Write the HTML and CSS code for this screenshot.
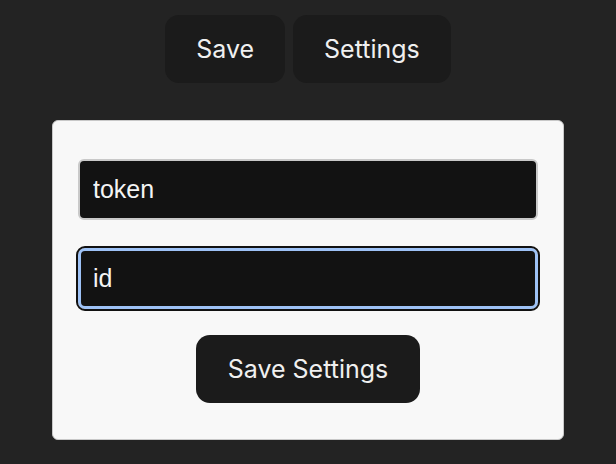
FILE: index.html
```html
<!DOCTYPE html>
<html>
<head>
<meta charset="utf-8">
<link rel="stylesheet" href="styles.css">
</head>
<body>
<nav class="toolbar">
  <button class="btn">Save</button>
  <button class="btn">Settings</button>
</nav>
<form class="card">
  <input class="field" type="text" value="token">
  <input class="field field-focus" type="text" value="id">
  <button class="btn btn-save" type="button">Save Settings</button>
</form>
</body>
</html>
```
FILE: styles.css
```css
html, body {
  margin: 0;
  padding: 0;
  background: #232323;
}
body {
  padding-top: 15px;
  font-family: Inter, "Noto Sans", sans-serif;
}
.toolbar {
  display: flex;
  justify-content: center;
  gap: 8px;
}
.btn {
  font-family: Inter, "Noto Sans", sans-serif;
  font-size: 25px;
  color: #f0f0f0;
  background: #1b1b1b;
  border: none;
  border-radius: 14px;
  height: 68px;
  padding: 0 31px;
  line-height: 1;
}
.card {
  box-sizing: border-box;
  width: 512px;
  margin: 37px auto 0;
  background: #f8f8f8;
  border: 1px solid #c8c8c8;
  border-radius: 6px;
  padding: 38px 25px 36px;
  display: flex;
  flex-direction: column;
  align-items: center;
}
.field {
  box-sizing: border-box;
  width: 460px;
  height: 61px;
  margin: 0;
  background: #121212;
  color: #f4f4f4;
  border: 2px solid #c9c9c9;
  border-radius: 6px;
  padding: 0 13px;
  font-family: "Liberation Sans", Arial, sans-serif;
  font-size: 25px;
}
.field + .field {
  margin-top: 28px;
}
.field-focus {
  border: 3px solid #9ec2f6;
  padding: 0 12px;
  outline: 2px solid #111;
  border-radius: 7px;
}
.btn-save {
  margin-top: 26px;
  padding: 0 32px;
}
```
